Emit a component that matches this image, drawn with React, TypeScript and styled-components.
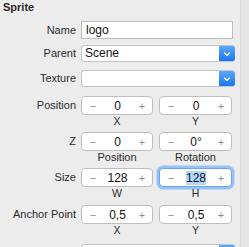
import React from 'react';
import styled, { createGlobalStyle } from 'styled-components';

const GlobalStyle = createGlobalStyle`
  html, body {
    margin: 0;
    padding: 0;
    background: #ececec;
  }
  body {
    font-family: "Liberation Sans", Arial, sans-serif;
    -webkit-font-smoothing: antialiased;
  }
`;

const Window = styled.div`
  display: flex;
  width: 249px;
  height: 247px;
  overflow: hidden;
  background: #ececec;
`;

const Panel = styled.div`
  display: flex;
  flex-direction: column;
  width: 240px;
`;

const Scrollbar = styled.div`
  width: 8px;
  border-left: 1px solid #dadada;
  background: #e6e6e6;
`;

const Header = styled.div`
  height: 14px;
  line-height: 14px;
  padding-left: 3px;
  font-size: 11px;
  font-weight: bold;
  color: #2a2a2a;
`;

const Row = styled.div<{ $top: number }>`
  display: flex;
  align-items: flex-start;
  gap: 5px;
  margin-top: ${(p) => p.$top}px;
`;

const Label = styled.div<{ $h: number }>`
  width: 76px;
  flex-shrink: 0;
  height: ${(p) => p.$h}px;
  line-height: ${(p) => p.$h}px;
  text-align: right;
  font-size: 11px;
  color: #2b2b2b;
  white-space: nowrap;
`;

const TextField = styled.div`
  box-sizing: border-box;
  width: 152px;
  height: 18px;
  border: 1px solid #bcbcbc;
  background: #fff;
  padding-left: 4px;
  font-size: 12px;
  line-height: 16px;
  color: #111;
`;

const Select = styled.div`
  box-sizing: border-box;
  display: flex;
  width: 154px;
  height: 17px;
  border: 1px solid #c4c4c4;
  border-right: none;
  border-radius: 3px;
  background: #fff;
  overflow: hidden;
`;

const SelectText = styled.div`
  flex: 1;
  padding-left: 3px;
  font-size: 12px;
  line-height: 15px;
  color: #111;
`;

const SelectButton = styled.div`
  display: flex;
  align-items: center;
  justify-content: center;
  width: 16px;
  margin-top: -1px;
  height: 17px;
  border-radius: 0 3px 3px 0;
  background: linear-gradient(#5fabfb, #1672f2);
`;

const Separator = styled.div<{ $top: number }>`
  height: 1px;
  margin: ${(p) => p.$top}px 0 0 5px;
  width: 228px;
  background: #cfcfcf;
`;

const Pair = styled.div`
  display: flex;
  gap: 6px;
`;

const Field = styled.div`
  display: flex;
  flex-direction: column;
  align-items: center;
`;

const Stepper = styled.div<{ $w: number; $focus?: boolean }>`
  box-sizing: border-box;
  display: flex;
  align-items: center;
  justify-content: space-between;
  width: ${(p) => p.$w}px;
  height: 19px;
  padding: 0 6px 0 7px;
  border: 1px solid ${(p) => (p.$focus ? '#6aa3ee' : '#bdbdbd')};
  border-radius: 4px;
  background: #fff;
  box-shadow: ${(p) => (p.$focus ? '0 0 0 2.5px #98c2f5' : 'none')};
`;

const Sign = styled.span`
  width: 8px;
  font-size: 11px;
  color: #8c8c8c;
  text-align: center;
`;

const Value = styled.span<{ $sel?: boolean }>`
  font-size: 12px;
  line-height: 14px;
  color: #111;
  background: ${(p) => (p.$sel ? '#b3d7ff' : 'transparent')};
`;

const Sub = styled.div<{ $h: number; $size: number }>`
  height: ${(p) => p.$h}px;
  line-height: ${(p) => p.$h}px;
  padding-top: 1px;
  font-size: ${(p) => p.$size}px;
  color: #2b2b2b;
`;

function Chevron() {
  return (
    <svg width="8" height="6" viewBox="0 0 8 6">
      <path d="M1.5 2 L4 4.3 L6.5 2" fill="none" stroke="#fff" strokeWidth="1.3" strokeLinecap="round" />
    </svg>
  );
}

type Cell = { value: string; sub: string; w: number; focus?: boolean };

function StepperPair({
  top,
  label,
  cells,
  subH,
  subSize,
}: {
  top: number;
  label: string;
  cells: Cell[];
  subH: number;
  subSize: number;
}) {
  return (
    <Row $top={top}>
      <Label $h={19}>{label}</Label>
      <Pair>
        {cells.map((c, i) => (
          <Field key={i}>
            <Stepper $w={c.w} $focus={c.focus}>
              <Sign>−</Sign>
              <Value $sel={c.focus}>{c.value}</Value>
              <Sign>+</Sign>
            </Stepper>
            <Sub $h={subH} $size={subSize}>
              {c.sub}
            </Sub>
          </Field>
        ))}
      </Pair>
    </Row>
  );
}

export default function App() {
  return (
    <>
      <GlobalStyle />
      <Window>
        <Panel>
          <Header>Sprite</Header>
          <Row $top={7}>
            <Label $h={18}>Name</Label>
            <TextField>logo</TextField>
          </Row>
          <Row $top={6}>
            <Label $h={17}>Parent</Label>
            <Select>
              <SelectText>Scene</SelectText>
              <SelectButton>
                <Chevron />
              </SelectButton>
            </Select>
          </Row>
          <Separator $top={4} />
          <Row $top={4}>
            <Label $h={17}>Texture</Label>
            <Select>
              <SelectText />
              <SelectButton>
                <Chevron />
              </SelectButton>
            </Select>
          </Row>
          <Separator $top={6} />
          <StepperPair
            top={3}
            label="Position"
            subH={10}
            subSize={10.5}
            cells={[
              { value: '0', sub: 'X', w: 72 },
              { value: '0', sub: 'Y', w: 73 },
            ]}
          />
          <StepperPair
            top={6}
            label="Z"
            subH={11}
            subSize={11}
            cells={[
              { value: '0', sub: 'Position', w: 72 },
              { value: '0°', sub: 'Rotation', w: 73 },
            ]}
          />
          <StepperPair
            top={5}
            label="Size"
            subH={10}
            subSize={10.5}
            cells={[
              { value: '128', sub: 'W', w: 72 },
              { value: '128', sub: 'H', w: 73, focus: true },
            ]}
          />
          <StepperPair
            top={7}
            label="Anchor Point"
            subH={11}
            subSize={10.5}
            cells={[
              { value: '0,5', sub: 'X', w: 72 },
              { value: '0,5', sub: 'Y', w: 73 },
            ]}
          />
          <Separator $top={6} />
          <Row $top={2}>
            <Label $h={17} />
            <Select>
              <SelectText />
              <SelectButton>
                <Chevron />
              </SelectButton>
            </Select>
          </Row>
        </Panel>
        <Scrollbar />
      </Window>
    </>
  );
}
